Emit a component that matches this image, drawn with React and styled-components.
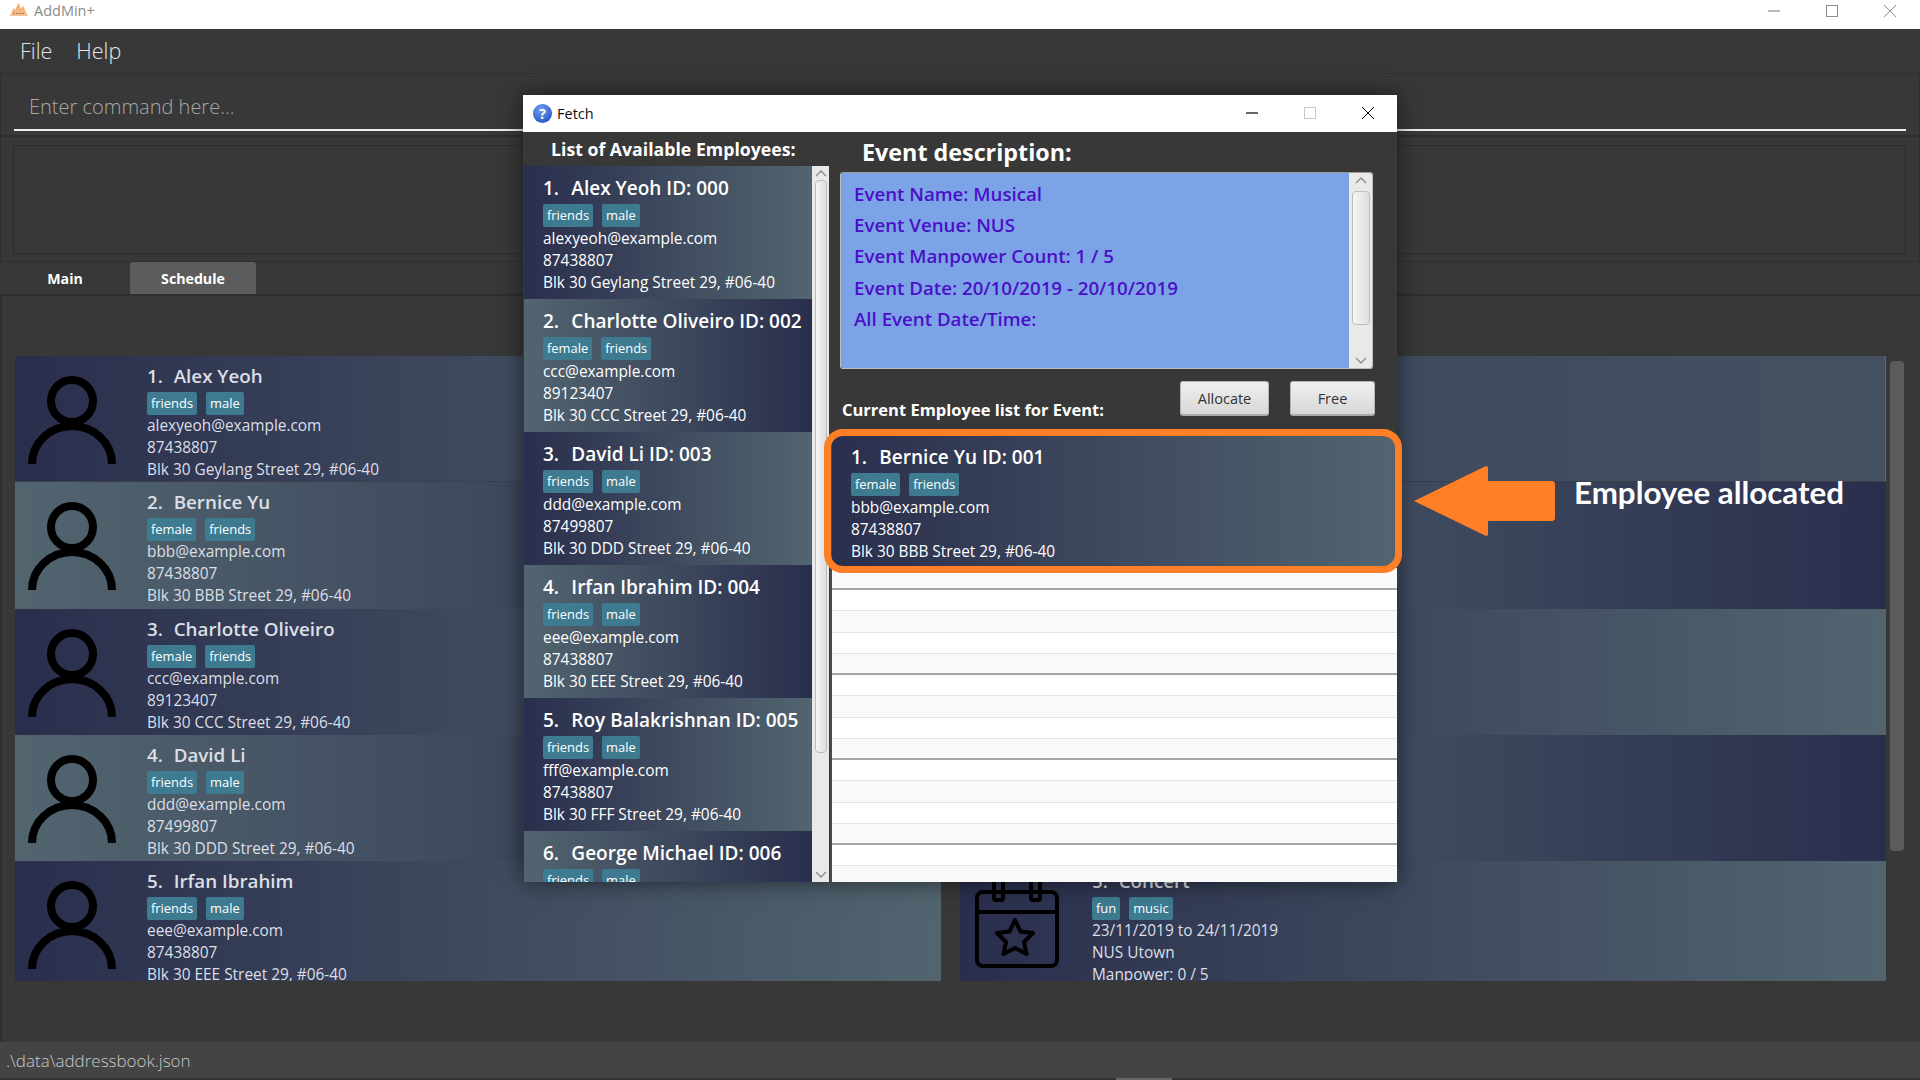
import React from "react";
import styled, { createGlobalStyle } from "styled-components";

const DARK = "#2a2e4d";
const LIGHT = "#52656f";
const UI_FONT = `"Open Sans", "Noto Sans", sans-serif`;

const GlobalStyle = createGlobalStyle`
  html, body { margin: 0; padding: 0; background: #383838; }
  body { font-family: ${UI_FONT}; overflow: hidden; }
  * { box-sizing: border-box; }
`;

const employees = [
  { name: "Alex Yeoh", id: "000", tags: ["friends", "male"], email: "alexyeoh@example.com", phone: "87438807", address: "Blk 30 Geylang Street 29, #06-40" },
  { name: "Bernice Yu", id: "001", tags: ["female", "friends"], email: "bbb@example.com", phone: "87438807", address: "Blk 30 BBB Street 29, #06-40" },
  { name: "Charlotte Oliveiro", id: "002", tags: ["female", "friends"], email: "ccc@example.com", phone: "89123407", address: "Blk 30 CCC Street 29, #06-40" },
  { name: "David Li", id: "003", tags: ["friends", "male"], email: "ddd@example.com", phone: "87499807", address: "Blk 30 DDD Street 29, #06-40" },
  { name: "Irfan Ibrahim", id: "004", tags: ["friends", "male"], email: "eee@example.com", phone: "87438807", address: "Blk 30 EEE Street 29, #06-40" },
  { name: "Roy Balakrishnan", id: "005", tags: ["friends", "male"], email: "fff@example.com", phone: "87438807", address: "Blk 30 FFF Street 29, #06-40" },
  { name: "George Michael", id: "006", tags: ["friends", "male"], email: "ggg@example.com", phone: "87438807", address: "Blk 30 GGG Street 29, #06-40" },
];

const available = employees.filter((e) => e.id !== "001");
const descLines = [
  "Event Name: Musical",
  "Event Venue: NUS",
  "Event Manpower Count: 1 / 5",
  "Event Date: 20/10/2019 - 20/10/2019",
  "All Event Date/Time:",
];
const fillerRows = Array.from({ length: 15 }, (_, i) => i);

const Page = styled.div`
  width: 1920px;
  height: 1080px;
  position: relative;
  display: flex;
  flex-direction: column;
  background: #383838;
  overflow: hidden;
`;

const TitleBar = styled.div`
  height: 29px;
  flex: none;
  background: #fff;
  display: flex;
  align-items: center;
  padding: 0 0 8px 10px;
`;

const AppName = styled.span`
  margin-left: 6px;
  font-size: 14.5px;
  color: #8a8a8a;
`;

const WindowControls = styled.div`
  margin-left: auto;
  display: flex;
  align-items: center;
  gap: 46px;
  padding-right: 24px;
`;

const MenuBar = styled.div`
  height: 44px;
  flex: none;
  display: flex;
  align-items: center;
  gap: 24px;
  padding: 0 0 2px 20px;
  font-size: 21.5px;
  font-weight: 300;
  color: #e4e4e4;
`;

const CommandBox = styled.div`
  height: 64px;
  flex: none;
  border: 1px solid #2f2f2f;
  border-bottom-width: 2px;
  padding: 13px 13px 0;
`;

const CommandInput = styled.div`
  height: 44px;
  border-bottom: 2px solid #eee;
  padding-left: 15px;
  font-size: 20px;
  line-height: 40px;
  font-weight: 300;
  color: #a8a8a8;
`;

const ResultOuter = styled.div`
  height: 125px;
  flex: none;
  border: 1px solid #2f2f2f;
  border-top: 0;
  padding: 8px 13px 7px 12px;
`;

const ResultInner = styled.div`
  height: 100%;
  border: 1px solid #2d2d2d;
`;

const TabRow = styled.div`
  height: 32px;
  flex: none;
  display: flex;
`;

const Tab = styled.div`
  width: ${(p) => p.$w}px;
  height: 32px;
  display: flex;
  align-items: center;
  justify-content: center;
  border-radius: 3px 3px 0 0;
  font-size: 14.2px;
  font-weight: 700;
  color: #fff;
  background: ${(p) => (p.$active ? "#5c5c5c" : "transparent")};
`;

const Content = styled.div`
  flex: 1;
  min-height: 0;
  display: flex;
  align-items: flex-start;
  border: 1px solid #2f2f2f;
  border-width: 2px 0 0 2px;
  padding: 60px 0 0 13px;
`;

const MainList = styled.div`
  width: ${(p) => p.$w}px;
  height: 625px;
  margin-right: ${(p) => p.$gap}px;
  overflow: hidden;
  flex: none;
`;

const ContentScroll = styled.div`
  width: 14px;
  height: 490px;
  margin-top: 5px;
  flex: none;
  background: #5b5b5b;
  border-radius: 4px;
`;

const StatusBar = styled.div`
  height: 36px;
  flex: none;
  background: #444;
  padding-left: 6px;
  font-size: 17px;
  font-weight: 300;
  line-height: 37px;
  color: #c8c8c8;
`;

const BottomStrip = styled.div`
  height: 2px;
  flex: none;
  background: #333;
  padding-left: 1116px;
`;

const StripHandle = styled.div`
  width: 56px;
  height: 2px;
  background: #666;
`;

/* list rows shared by the main window and the Fetch dialog */
const Row = styled.div`
  height: ${(p) => p.$h}px;
  display: flex;
  flex: none;
  overflow: hidden;
  background: linear-gradient(to right, ${(p) => (p.$flip ? `${LIGHT}, ${DARK}` : `${DARK}, ${LIGHT}`)});
  border-bottom: ${(p) => (p.$line ? "1px solid #3a3f49" : "0")};
`;

const SelectedRow = styled(Row)`
  background: linear-gradient(to right, #3a465b, #445161);
  border-right: 1px solid #2c7d92;
`;

const IconCell = styled.div`
  width: 132px;
  flex: none;
  padding: ${(p) => p.$top}px 0 0 ${(p) => p.$left}px;
`;

const Details = styled.div`
  flex: 1;
  min-width: 0;
  padding: ${(p) => (p.$modal ? "8px 0 0 19px" : "6px 0 0 0")};
  color: ${(p) => (p.$modal ? "#fff" : "#dcdfe6")};
`;

const Name = styled.div`
  height: 28px;
  font-size: ${(p) => (p.$modal ? "19px" : "18.8px")};
  font-weight: 600;
  line-height: 28px;
  white-space: pre;
`;

const RowNumber = styled.span`
  margin-right: ${(p) => (p.$modal ? "2.4px" : "1px")};
`;

const Tags = styled.div`
  display: flex;
  gap: 9px;
  height: 23px;
  margin: ${(p) => (p.$modal ? "2px 0 1px" : "2px 0 0")};
`;

const Tag = styled.span`
  height: 23px;
  padding: 0 4px;
  background: #3e7b91;
  border-radius: 2px;
  font-size: 12.9px;
  line-height: 22px;
  color: #fff;
`;

const Line = styled.div`
  height: 22px;
  font-size: 15.4px;
  line-height: 22px;
  white-space: nowrap;
`;

/* Fetch dialog */
const Dialog = styled.div`
  position: absolute;
  left: 523px;
  top: 95px;
  width: 874px;
  height: 787px;
  display: flex;
  flex-direction: column;
  background: #383838;
  box-shadow: 0 0 22px rgba(0, 0, 0, 0.55);
`;

const DialogTitle = styled.div`
  height: 37px;
  flex: none;
  background: #fff;
  display: flex;
  align-items: center;
  padding: 0 0 1px 10px;
  font-size: 14.5px;
  color: #111;
`;

const HelpDot = styled.div`
  width: 19px;
  height: 19px;
  margin-right: 5px;
  border-radius: 50%;
  background: radial-gradient(circle at 40% 30%, #6f9df0, #2a5cc8 75%);
  color: #fff;
  display: flex;
  align-items: center;
  justify-content: center;
  font-size: 14px;
  font-weight: 700;
`;

const DialogControls = styled.div`
  margin-left: auto;
  display: flex;
  align-items: center;
  gap: 46px;
  padding-right: 23px;
`;

const DialogBody = styled.div`
  flex: 1;
  min-height: 0;
  display: flex;
`;

const LeftColumn = styled.div`
  width: 306px;
  flex: none;
  padding-left: 1px;
  display: flex;
  flex-direction: column;
`;

const LeftHeading = styled.div`
  height: 34px;
  flex: none;
  padding-left: 27px;
  font-size: 17.7px;
  font-weight: 700;
  line-height: 34px;
  color: #fff;
  white-space: nowrap;
`;

const LeftPane = styled.div`
  flex: 1;
  min-height: 0;
  display: flex;
`;

const AvailableList = styled.div`
  width: 288px;
  flex: none;
  overflow: hidden;
`;

const VScroll = styled.div`
  width: ${(p) => p.$w}px;
  flex: none;
  background: #e9e9e9;
  display: flex;
  flex-direction: column;
  align-items: center;
  padding: 3px 0;
`;

const ScrollThumb = styled.div`
  flex: none;
  width: ${(p) => p.$w}px;
  height: ${(p) => p.$h}px;
  margin-top: ${(p) => p.$top}px;
  background: linear-gradient(to right, #f6f6f6, #dedede);
  border: 1px solid #bdbdbd;
  border-radius: 4px;
`;

const ArrowBottom = styled.div`
  margin-top: auto;
  line-height: 0;
`;

const RightColumn = styled.div`
  flex: 1;
  min-width: 0;
  display: flex;
  flex-direction: column;
  padding-left: 1px;
`;

const DescHeading = styled.div`
  height: 40px;
  flex: none;
  padding-left: 32px;
  font-size: 23.3px;
  font-weight: 700;
  line-height: 40px;
  color: #fff;
`;

const DescBox = styled.div`
  width: 533px;
  height: 197px;
  margin-left: 10px;
  flex: none;
  display: flex;
  overflow: hidden;
  border: 1px solid #bdbdbd;
  border-top-color: #9a9a9a;
  border-radius: 3px;
`;

const DescText = styled.div`
  flex: 1;
  background: #7ca3e8;
  padding: 5px 0 0 13px;
`;

const DescLine = styled.div`
  height: 31.2px;
  font-size: 18.7px;
  font-weight: 600;
  line-height: 31px;
  color: #4a10c6;
  white-space: nowrap;
`;

const ActionRow = styled.div`
  height: 66px;
  flex: none;
  display: flex;
  align-items: flex-start;
  padding: 12px 22px 0 12px;
`;

const CurrentLabel = styled.div`
  flex: 1;
  padding-top: 17px;
  font-size: 16.5px;
  font-weight: 700;
  line-height: 24px;
  color: #fff;
  white-space: nowrap;
`;

const Button = styled.button`
  width: ${(p) => p.$w}px;
  height: 35px;
  margin-left: ${(p) => p.$gap}px;
  padding: 0;
  font-family: inherit;
  font-size: 14.5px;
  color: #333;
  background: linear-gradient(to bottom, #efefef, #d8d8d8);
  border: 1px solid #b4b4b4;
  border-bottom: 2px solid #a8a8a8;
  border-radius: 3px;
`;

const AllocatedList = styled.div`
  flex: 1;
  min-height: 0;
  border-left: 2px solid #4a4a4a;
  overflow: hidden;
  background: #fff;
`;

const FillerRow = styled.div`
  height: ${(p) => p.$h}px;
  background: ${(p) => (p.$odd ? "#f9f9f9" : "#fff")};
  border-bottom: ${(p) => (p.$dark ? "2px solid #a6a6a6" : "1px solid #e2e2e2")};
`;

/* hand-drawn annotation sitting on top of the screenshot */
const Highlight = styled.div`
  position: absolute;
  left: 824px;
  top: 429px;
  width: 578px;
  height: 144px;
  border: 7px solid #ff7f27;
  border-radius: 19px;
`;

const ArrowMark = styled.svg`
  position: absolute;
  left: 1414px;
  top: 466px;
`;

const Callout = styled.div`
  position: absolute;
  left: 1574px;
  top: 473px;
  font-family: Lato, "Open Sans", sans-serif;
  font-size: 31.3px;
  font-weight: 700;
  line-height: 38px;
  color: #fff;
  white-space: nowrap;
`;

const LogoWrap = styled.div`
  display: flex;
  margin-top: -3px;
`;

function Chevron({ up, color = "#8c8c8c" }) {
  return (
    <svg width="12" height="8" viewBox="0 0 12 8">
      <path d={up ? "M1 7 L6 2 L11 7" : "M1 1 L6 6 L11 1"} fill="none" stroke={color} strokeWidth="1.4" />
    </svg>
  );
}

function Controls({ color, maxColor }) {
  return (
    <>
      <svg width="12" height="12" viewBox="0 0 12 12">
        <path d="M0 6 H12" stroke={color} strokeWidth="1.2" />
      </svg>
      <svg width="12" height="12" viewBox="0 0 12 12">
        <rect x="0.5" y="0.5" width="11" height="11" fill="none" stroke={maxColor} />
      </svg>
      <svg width="12" height="12" viewBox="0 0 12 12">
        <path d="M0 0 L12 12 M12 0 L0 12" stroke={color} strokeWidth="1" />
      </svg>
    </>
  );
}

function LogoMark() {
  return (
    <LogoWrap>
      <svg width="18" height="13" viewBox="0 0 18 13">
        <defs>
          <linearGradient id="logoFill" x1="0" y1="0" x2="0" y2="1">
            <stop offset="0" stopColor="#f2a25f" />
            <stop offset="1" stopColor="#f6c39a" />
          </linearGradient>
        </defs>
        <path d="M0 13 L3.5 5 L5 7 L8.5 0 L11 6 L13 3 L18 13 Z" fill="url(#logoFill)" />
        <path d="M3 10.5 H14" stroke="#a8622b" strokeWidth="0.8" strokeDasharray="2 1" />
      </svg>
    </LogoWrap>
  );
}

function PersonIcon() {
  return (
    <svg width="88" height="88" viewBox="0 0 88 88">
      <circle cx="44" cy="25" r="21" fill="none" stroke="#000" strokeWidth="8" />
      <path d="M4 88 A40 38 0 0 1 84 88" fill="none" stroke="#000" strokeWidth="8" />
    </svg>
  );
}

function CalendarIcon() {
  return (
    <svg width="84" height="92" viewBox="0 0 84 92">
      <rect x="2" y="16" width="80" height="74" rx="6" fill="none" stroke="#000" strokeWidth="4" />
      <path d="M2 36 H82" stroke="#000" strokeWidth="4" />
      <rect x="19" y="2" width="9" height="22" rx="2" fill="none" stroke="#000" strokeWidth="4" />
      <rect x="56" y="2" width="9" height="22" rx="2" fill="none" stroke="#000" strokeWidth="4" />
      <path
        d="M40 44 L45.5 55.5 L58 57 L49 66 L51.500 78 L40 72 L28.500 78 L31 66 L22 57 L34.500 55.500 Z"
        fill="none"
        stroke="#000"
        strokeWidth="4"
        strokeLinejoin="round"
      />
    </svg>
  );
}

function CardText({ index, title, tags, lines, modal }) {
  return (
    <Details $modal={modal}>
      <Name $modal={modal}>
        <RowNumber $modal={modal}>{`${index}.  `}</RowNumber>
        {title}
      </Name>
      <Tags $modal={modal}>
        {tags.map((t) => (
          <Tag key={t}>{t}</Tag>
        ))}
      </Tags>
      {lines.map((l) => (
        <Line key={l}>{l}</Line>
      ))}
    </Details>
  );
}

function DialogRow({ person, index, flip }) {
  return (
    <Row $h={133} $flip={flip}>
      <CardText
        modal
        index={index}
        title={`${person.name} ID: ${person.id}`}
        tags={person.tags}
        lines={[person.email, person.phone, person.address]}
      />
    </Row>
  );
}

export default function App() {
  return (
    <Page>
      <GlobalStyle />
      <TitleBar>
        <LogoMark />
        <AppName>AddMin+</AppName>
        <WindowControls>
          <Controls color="#8c8c8c" maxColor="#8c8c8c" />
        </WindowControls>
      </TitleBar>
      <MenuBar>
        <span>File</span>
        <span>Help</span>
      </MenuBar>
      <CommandBox>
        <CommandInput>Enter command here...</CommandInput>
      </CommandBox>
      <ResultOuter>
        <ResultInner />
      </ResultOuter>
      <TabRow>
        <Tab $w={130}>Main</Tab>
        <Tab $w={126} $active>
          Schedule
        </Tab>
      </TabRow>
      <Content>
        <MainList $w={926} $gap={19}>
          {employees.slice(0, 5).map((p, i) => (
            <Row key={p.id} $h={126.25} $flip={i % 2 === 1} $line={i === 0}>
              <IconCell $top={20} $left={13}>
                <PersonIcon />
              </IconCell>
              <CardText
                index={i + 1}
                title={p.name}
                tags={p.tags}
                lines={[p.email, p.phone, p.address]}
              />
            </Row>
          ))}
        </MainList>
        <MainList $w={926} $gap={4}>
          <SelectedRow $h={126.25} $line />
          <Row $h={126.25} $flip />
          <Row $h={126.25} />
          <Row $h={126.25} $flip />
          <Row $h={126.25}>
            <IconCell $top={15} $left={15}>
              <CalendarIcon />
            </IconCell>
            <CardText
              index={5}
              title="Concert"
              tags={["fun", "music"]}
              lines={["23/11/2019 to 24/11/2019", "NUS Utown", "Manpower: 0 / 5"]}
            />
          </Row>
        </MainList>
        <ContentScroll />
      </Content>
      <StatusBar>.\data\addressbook.json</StatusBar>
      <BottomStrip>
        <StripHandle />
      </BottomStrip>

      <Dialog>
        <DialogTitle>
          <HelpDot>?</HelpDot>
          Fetch
          <DialogControls>
            <Controls color="#000" maxColor="#c8c8c8" />
          </DialogControls>
        </DialogTitle>
        <DialogBody>
          <LeftColumn>
            <LeftHeading>List of Available Employees:</LeftHeading>
            <LeftPane>
              <AvailableList>
                {available.map((p, i) => (
                  <DialogRow key={p.id} person={p} index={i + 1} flip={i % 2 === 1} />
                ))}
              </AvailableList>
              <VScroll $w={17}>
                <Chevron up />
                <ScrollThumb $w={12} $h={573} $top={3} />
                <ArrowBottom>
                  <Chevron />
                </ArrowBottom>
              </VScroll>
            </LeftPane>
          </LeftColumn>
          <RightColumn>
            <DescHeading>Event description:</DescHeading>
            <DescBox>
              <DescText>
                {descLines.map((l) => (
                  <DescLine key={l}>{l}</DescLine>
                ))}
              </DescText>
              <VScroll $w={23}>
                <Chevron up />
                <ScrollThumb $w={18} $h={134} $top={7} />
                <ArrowBottom>
                  <Chevron />
                </ArrowBottom>
              </VScroll>
            </DescBox>
            <ActionRow>
              <CurrentLabel>Current Employee list for Event:</CurrentLabel>
              <Button $w={89}>Allocate</Button>
              <Button $w={85} $gap={21}>
                Free
              </Button>
            </ActionRow>
            <AllocatedList>
              <DialogRow person={employees[1]} index={1} />
              {fillerRows.map((i) => (
                <FillerRow key={i} $odd={i % 2 === 0} $h={i === 0 ? 22 : 21.25} $dark={i % 4 === 0} />
              ))}
            </AllocatedList>
          </RightColumn>
        </DialogBody>
      </Dialog>

      <Highlight />
      <ArrowMark width="141" height="70" viewBox="0 0 141 70">
        <path
          d="M0 35 L72 0 L74 1 V15 H139 L141 17 V53 L139 55 H74 V69 L72 70 Z"
          fill="#ff7f27"
        />
      </ArrowMark>
      <Callout>Employee allocated</Callout>
    </Page>
  );
}
